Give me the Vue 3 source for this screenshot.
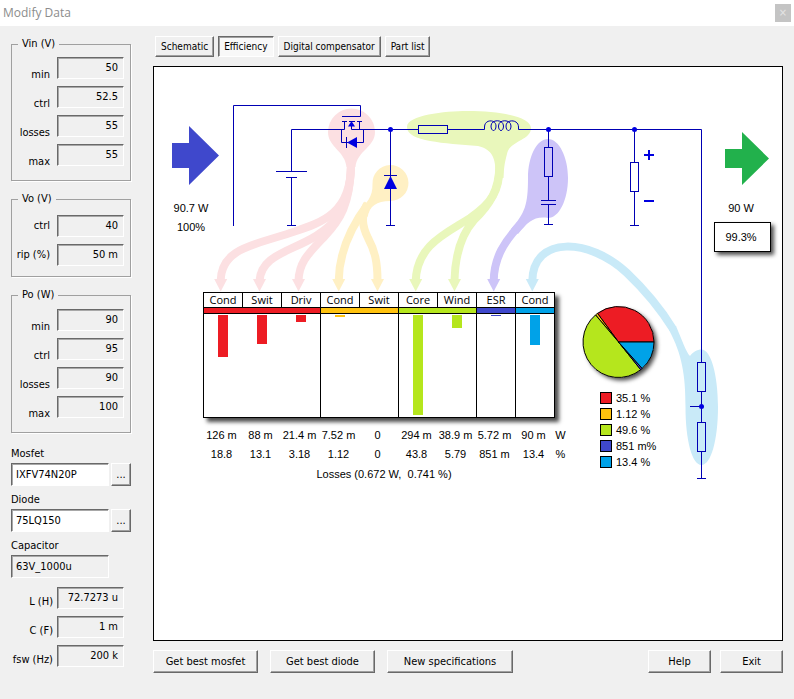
<script setup>
import { ref } from 'vue'

const groups = [
  { title: 'Vin (V)', key: 'vin', rows: [['min', '50'], ['ctrl', '52.5'], ['losses', '55'], ['max', '55']] },
  { title: 'Vo (V)', key: 'vo', rows: [['ctrl', '40'], ['rip (%)', '50 m']] },
  { title: 'Po (W)', key: 'po', rows: [['min', '90'], ['ctrl', '95'], ['losses', '90'], ['max', '100']] }
]

const parts = [
  { label: 'Mosfet', value: 'IXFV74N20P', editable: true },
  { label: 'Diode', value: '75LQ150', editable: true },
  { label: 'Capacitor', value: '63V_1000u', editable: false }
]

const passives = [
  ['L (H)', '72.7273 u'],
  ['C (F)', '1 m'],
  ['fsw (Hz)', '200 k']
]

const tabs = ['Schematic', 'Efficiency', 'Digital compensator', 'Part list']
const activeTab = ref('Efficiency')

const lossGroups = [
  { name: 'red', color: '#ed1c24', share: 35.1, text: '35.1 %', items: [['Cond', 42, '126 m', '18.8'], ['Swit', 29, '88 m', '13.1'], ['Driv', 7, '21.4 m', '3.18']] },
  { name: 'amber', color: '#ffc20e', share: 1.12, text: '1.12 %', items: [['Cond', 2, '7.52 m', '1.12'], ['Swit', 0, '0', '0']] },
  { name: 'lime', color: '#b5e61d', share: 49.6, text: '49.6 %', items: [['Core', 100, '294 m', '43.8'], ['Wind', 13, '38.9 m', '5.79']] },
  { name: 'indigo', color: '#3f48cc', share: 0.851, text: '851 m%', items: [['ESR', 1, '5.72 m', '851 m']] },
  { name: 'cyan', color: '#00a2e8', share: 13.4, text: '13.4 %', items: [['Cond', 30, '90 m', '13.4']] }
]
const losses = lossGroups.flatMap(g => g.items)

const pie = { x: 618.5, y: 342, r: 35.5 }
const total = lossGroups.reduce((sum, g) => sum + g.share, 0)
let angle = 0
const slices = lossGroups.map(g => {
  const from = angle
  angle -= (g.share / total) * Math.PI * 2
  const point = a => `${pie.x + pie.r * Math.cos(a)} ${pie.y + pie.r * Math.sin(a)}`
  const large = from - angle > Math.PI ? 1 : 0
  return { color: g.color, d: `M${pie.x} ${pie.y}L${point(from)}A${pie.r} ${pie.r} 0 ${large} 0 ${point(angle)}Z` }
})

const flows = [
  {
    color: '#fce0e2',
    blob: 'M328 132a23.500 23.500 0 0 1 47 0C375 147 357 151 355.500 167L346.500 167C345 151 328 147 328 132Z',
    strands: [
      'M351 165C351 215 320 223 290 233C255 245 221 248 220.700 281',
      'M351 165C350 210 335 224 316 236C290 252 261 255 259.500 281',
      'M351 165C350 205 340 220 325 236C308 254 299 262 298.500 281'
    ],
    tips: [220.7, 259.5, 298.5]
  },
  {
    color: '#fff0c4',
    blob: 'M372.500 184a18 18 0 1 1 18 17C376 201 370 206 367.500 217L360 211C366 202 373 198 372.500 184Z',
    strands: [
      'M368 204C356 220 339 248 338.700 281',
      'M367 204C361 216 362 226 368 238C375 251 377.500 262 377.500 281'
    ],
    tips: [338.7, 377.5]
  },
  {
    color: '#e9f7bb',
    blob: 'M407 127C407 115 445 111 467 111C505 111 531 118 531 128C531 140 511 141 507.500 152C504 165 504 168 503.500 178L495.500 178C496 160 494 150 478 146C445 143 407 142 407 127Z',
    strands: [
      'M499.500 165C500 190 492 203 470 218C445 234 417 245 415.700 281',
      'M499.500 165C499 190 490 205 474 220C460 236 455 258 454.500 281'
    ],
    tips: [415.7, 454.5]
  },
  {
    color: '#cdc4f8',
    blob: 'M528 178C528 156 537 139 548 139C559 139 568 157 568 178C568 200 559 218 548 218C534 216 528 222 518 234L511 229C525 213 528 205 528 178Z',
    strands: ['M522 223C504 241 494 258 493.700 281'],
    tips: [493.7]
  },
  {
    color: '#c9eaf8',
    blob: 'M669 330L676 326C682 340 686 352 690 356C693 352 697 349.500 701.500 349.500C711 349.500 718 375 718 407C718 440 711 465 701.500 465C692 465 685.500 440 685.500 407C685.500 375 682 354 669 330Z',
    strands: ['M532.300 281C533 235 590 238 627 273C647 292 660 308 673 329'],
    tips: [532.3]
  }
]
</script>

<template>
  <div class="window">
    <header class="titlebar">
      <h1>Modify Data</h1>
      <button class="close" aria-label="Close">×</button>
    </header>

    <div class="body">
      <aside class="sidebar">
        <fieldset v-for="g in groups" :key="g.key" :class="['group', g.key]">
          <legend>{{ g.title }}</legend>
          <div v-for="[label, value] in g.rows" :key="label" class="row">
            <label :for="`${g.key}-${label}`">{{ label }}</label>
            <input :id="`${g.key}-${label}`" class="field number" type="text" :value="value" readonly />
          </div>
        </fieldset>

        <div class="parts">
          <div v-for="p in parts" :key="p.label" class="part">
            <label :for="p.label">{{ p.label }}</label>
            <div class="part-line">
              <input :id="p.label" :class="['field', { editable: p.editable }]" type="text" :value="p.value" :readonly="!p.editable" />
              <button v-if="p.editable" class="btn more" :aria-label="`Choose ${p.label}`">...</button>
            </div>
          </div>
        </div>

        <div class="passives">
          <div v-for="[label, value] in passives" :key="label" class="row">
            <label :for="label">{{ label }}</label>
            <input :id="label" class="field number" type="text" :value="value" readonly />
          </div>
        </div>
      </aside>

      <main class="content">
        <nav class="tabs">
          <button v-for="t in tabs" :key="t" :class="['btn', 'tab', { active: t === activeTab }]" @click="activeTab = t">{{ t }}</button>
        </nav>

        <section class="canvas">
          <svg class="schematic" width="628" height="573" viewBox="154 67 628 573">
            <defs>
              <filter id="shadow" x="-20%" y="-20%" width="160%" height="160%">
                <feDropShadow dx="3" dy="3" stdDeviation="2" flood-color="#000" flood-opacity="0.7" />
              </filter>
            </defs>

            <g v-for="f in flows" :key="f.color">
              <path :d="f.blob" :fill="f.color" />
              <path v-for="s in f.strands" :key="s" :d="s" fill="none" :stroke="f.color" stroke-width="8" />
              <path v-for="x in f.tips" :key="x" :d="`M${x - 6.5} 279h13l-6.500 12.500z`" :fill="f.color" />
            </g>

            <path d="M172 143H189V126L219 155.500L189 185V168H172Z" fill="#3f48cc" />
            <path d="M725 149H742V132L769 158.500L742 185V168H725Z" fill="#22b14c" />

            <g class="wire">
              <path d="M233.500 226V105.500H360.500V116.500H342" />
              <path d="M291.500 171V129.500H344.500V121.500M342 121.500H347M349 121.500H355M357 121.500H362M359.500 121.500V129.500M351.500 122V129.500H418" />
              <path d="M341.500 129.500V142.500H363.500V129.500M346.500 137V148" />
              <path d="M276 171.500H307M286 177.500H297M291.500 177V225.500M287 225.500H296" />
              <path d="M390.500 129V225.500M386 225.500H395M384 175.500H397" />
              <rect x="418.500" y="125.500" width="29" height="8" />
              <path d="M448 129.500H484.500V127C484.500 119 496 119 496 126C496 132 491 132 491 126C491 119 503.500 119 503.500 126C503.500 132 498.500 132 498.500 126C498.500 119 511 119 511 126C511 132 506 132 506 126C506 119 518.500 119 518.500 127V129.500H701.500V362" />
              <path d="M548.500 129V147M548.500 177V200.500M541 200.500H556M541 204.500H556M548.500 204V224.500M544 224.500H553" />
              <rect x="544.500" y="147.500" width="8" height="29" />
              <path d="M634.500 129V162M634.500 192V225.500M630 225.500H639" />
              <rect x="630.500" y="162.500" width="8" height="29" />
              <rect x="697.500" y="362.500" width="8" height="29" />
              <path d="M701.500 392V422M690 406.500H701M701.500 452V478.500M697 478.500H706" />
              <rect x="697.500" y="422.500" width="8" height="29" />
            </g>
            <g class="solid">
              <path d="M347 142.500L357 137V148Z" />
              <path d="M390.500 176L397 189H384Z" />
              <path d="M351.500 121L355 126.500H348Z" />
              <circle cx="390.500" cy="129.500" r="2.500" />
              <circle cx="548.500" cy="129.500" r="2.500" />
              <circle cx="634.500" cy="129.500" r="2.500" />
              <circle cx="701.500" cy="406.500" r="2.500" />
              <path d="M644 154H648V150H650V154H654V156H650V160H648V156H644ZM644 200H654V202H644Z" />
            </g>

            <rect x="714.500" y="222.500" width="56" height="29" fill="#fff" stroke="#000" filter="url(#shadow)" />
            <g class="power">
              <text x="191" y="212">90.7 W</text>
              <text x="191" y="231">100%</text>
              <text x="741" y="212">90 W</text>
              <text x="741" y="241">99.3%</text>
            </g>

            <circle :cx="pie.x" :cy="pie.y" :r="pie.r" fill="#fff" filter="url(#shadow)" />
            <path v-for="s in slices" :key="s.color" :d="s.d" :fill="s.color" stroke="#000" stroke-linejoin="round" />
          </svg>

          <figure class="losses">
            <div class="chart">
              <div v-for="g in lossGroups" :key="g.name" class="loss-group">
                <div class="heads">
                  <span v-for="i in g.items" :key="i[0]">{{ i[0] }}</span>
                </div>
                <div class="strip" :style="{ background: g.color }"></div>
                <div class="bars">
                  <span v-for="i in g.items" :key="i[0]">
                    <i :style="{ height: i[1] + 'px', background: g.color }"></i>
                  </span>
                </div>
              </div>
            </div>
            <table>
              <tbody>
                <tr>
                  <td v-for="(i, n) in losses" :key="n">{{ i[2] }}</td>
                  <th scope="row">W</th>
                </tr>
                <tr>
                  <td v-for="(i, n) in losses" :key="n">{{ i[3] }}</td>
                  <th scope="row">%</th>
                </tr>
              </tbody>
            </table>
            <figcaption>Losses (0.672 W,&nbsp; 0.741 %)</figcaption>
          </figure>

          <ul class="key">
            <li v-for="g in lossGroups" :key="g.name"><i :style="{ background: g.color }"></i>{{ g.text }}</li>
          </ul>
        </section>

        <footer class="actions">
          <button class="btn">Get best mosfet</button>
          <button class="btn">Get best diode</button>
          <button class="btn wide">New specifications</button>
          <div class="end">
            <button class="btn small">Help</button>
            <button class="btn small">Exit</button>
          </div>
        </footer>
      </main>
    </div>
  </div>
</template>

<style>
body {
  background: #f0f0f0;
}
</style>

<style scoped>
.window {
  box-sizing: border-box;
  min-height: 100vh;
  background: #f0f0f0;
  color: #000;
  font: 11px/14px "DejaVu Sans Condensed", "Noto Sans", sans-serif;
}
.window * {
  box-sizing: border-box;
}
button,
input {
  font: inherit;
  color: inherit;
  border-radius: 0;
  margin: 0;
}
.titlebar {
  display: flex;
  justify-content: space-between;
  align-items: center;
  height: 26px;
  padding: 0 3px;
  background: #fff;
}
h1 {
  margin: 0;
  font: 12px/16px "Open Sans", sans-serif;
  color: #8c8c8c;
}
.close {
  width: 16px;
  height: 18px;
  padding: 0;
  border: 0;
  background: #c4c4c4;
  color: #e4e4e4;
  line-height: 16px;
}
.body {
  display: flex;
}
.sidebar {
  flex: none;
  width: 153px;
  padding: 11px 22px 0 11px;
}
.group {
  min-width: 0;
  margin: 0 0 11px;
  padding: 6px 6px 14px 0;
  border: 1px solid #a0a0a0;
  box-shadow: 1px 1px #fff;
}
.group.vo {
  padding: 9px 6px 10px 0;
}
.group.po {
  padding: 7px 6px 14px 0;
}
legend {
  margin-left: 6px;
  padding: 0 4px;
}
.row {
  display: flex;
  justify-content: flex-end;
  align-items: flex-end;
  gap: 7px;
  margin-bottom: 7px;
}
.row:last-child {
  margin-bottom: 0;
}
.vo .row {
  align-items: center;
}
.row label {
  white-space: nowrap;
}
.vin label,
.po label {
  margin-bottom: -3px;
}
.field {
  width: 98px;
  height: 23px;
  padding: 0 4px 1px;
  border: 1px solid;
  border-color: #696969 #fff #fff #696969;
  box-shadow: inset 1px 1px #a8a8a8;
  background: #f0f0f0;
  outline: 0;
}
.field.editable {
  background: #fff;
}
.field.number {
  width: 67px;
  height: 22px;
  padding: 0 5px 2px 0;
  text-align: right;
}
.part {
  margin-bottom: 7px;
}
.part label {
  display: block;
  margin-bottom: 2px;
}
.parts {
  padding: 3px 0 2px;
}
.part-line {
  display: flex;
  gap: 2px;
}
.passives {
  padding-right: 7px;
}
.passives .row {
  gap: 4px;
}
.btn {
  width: 105px;
  height: 23px;
  padding: 0;
  border: 1px solid;
  border-color: #fff #696969 #696969 #fff;
  box-shadow: inset -1px -1px #a0a0a0;
  background: #f0f0f0;
  white-space: nowrap;
}
.btn.more {
  width: 20px;
}
.btn.wide {
  width: 126px;
}
.btn.small {
  width: 63px;
}
.content {
  flex: 1;
  min-width: 0;
  padding: 10px 11px 0 0;
}
.tabs {
  display: flex;
  gap: 4px;
  padding: 0 2px 9px;
}
.btn.tab {
  width: auto;
  height: 21px;
  padding: 0 5px;
  font-size: 10px;
}
.btn.tab.active {
  border-color: #696969 #fff #fff #696969;
  box-shadow: inset 1px 1px #a0a0a0;
  background: #f8f8f8;
}
.canvas {
  position: relative;
  min-height: 575px;
  border: 1px solid #000;
  background: #fff;
  font-family: "Liberation Sans", Arial, sans-serif;
}
.schematic {
  display: block;
}
.wire {
  fill: none;
  stroke: #0000b4;
  stroke-width: 1px;
}
.solid {
  fill: #0000e0;
}
.power text {
  font-size: 11px;
  text-anchor: middle;
}
.losses {
  position: absolute;
  left: 49px;
  top: 225px;
  margin: 0;
}
.chart {
  display: flex;
  width: 352px;
  border: 1px solid #000;
  border-right: 0;
  background: #fff;
  box-shadow: 4px 4px 4px rgba(0, 0, 0, 0.7);
}
.loss-group {
  border-right: 1px solid #000;
}
.heads,
.bars {
  display: flex;
}
.heads span {
  width: 39px;
  height: 14px;
  border-right: 1px solid #000;
  text-align: center;
  font: 11px/14px "Open Sans", sans-serif;
}
.heads span:last-child {
  width: 38px;
  border-right: 0;
}
.strip {
  height: 7px;
  border: solid #000;
  border-width: 1px 0;
}
.bars span {
  display: flex;
  justify-content: center;
  width: 39px;
  height: 103px;
  padding: 1px 1px 0 0;
}
.bars span:last-child {
  width: 38px;
  padding-right: 0;
}
.bars i {
  width: 10px;
}
table {
  table-layout: fixed;
  width: 366px;
  margin: 7px 0 0 -1px;
  border-collapse: collapse;
}
td,
th {
  width: 39px;
  height: 19px;
  padding: 0;
  text-align: center;
  font-weight: 400;
  white-space: nowrap;
}
th {
  width: 15px;
}
figcaption {
  width: 362px;
  line-height: 22px;
  text-align: center;
}
.key {
  position: absolute;
  left: 446px;
  top: 323px;
  margin: 0;
  padding: 0;
  list-style: none;
}
.key li {
  display: flex;
  align-items: center;
  gap: 4px;
  height: 16px;
}
.key i {
  width: 12px;
  height: 12px;
  border: 1px solid #000;
}
.actions {
  display: flex;
  gap: 12px;
  padding: 9px 0 26px;
}
.end {
  display: flex;
  gap: 9px;
  margin-left: auto;
}
</style>
